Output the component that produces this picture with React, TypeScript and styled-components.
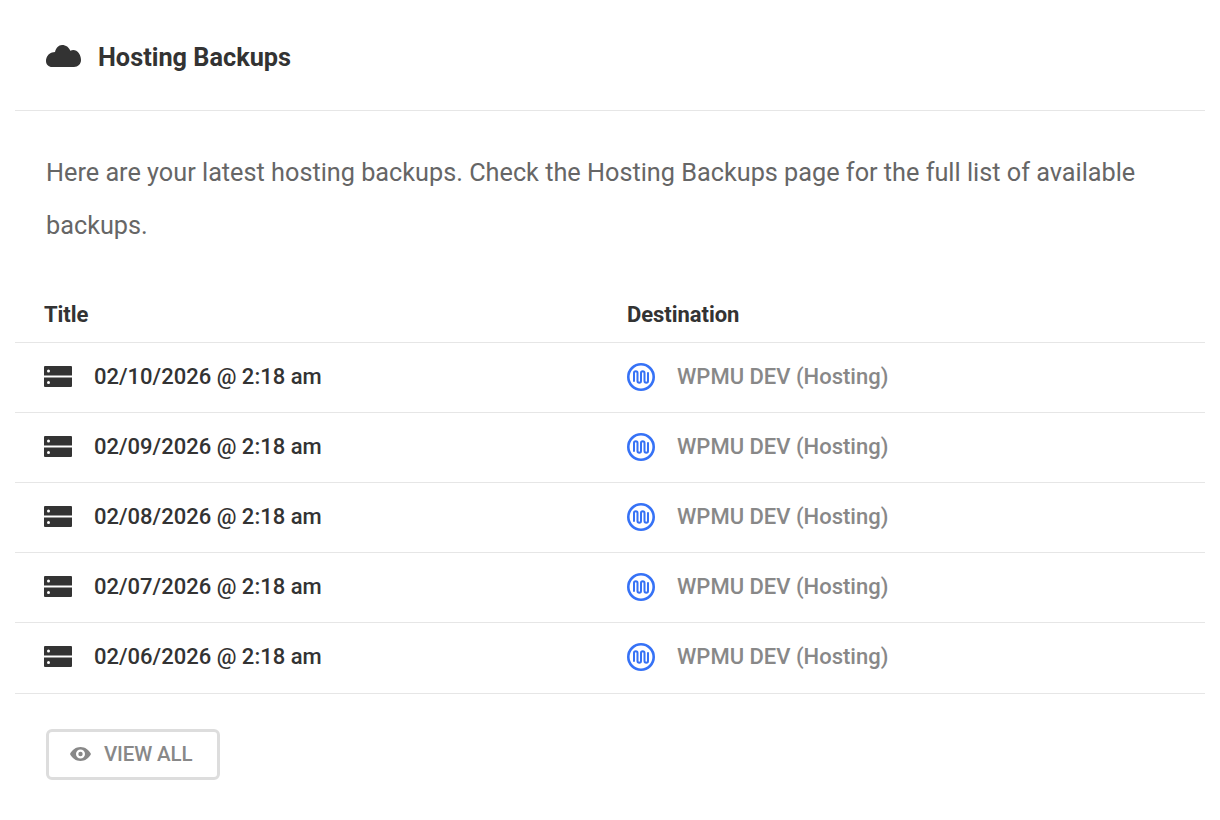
import styled, { createGlobalStyle } from "styled-components";

const GlobalStyle = createGlobalStyle`
  html, body {
    margin: 0;
    padding: 0;
    background: #fff;
    font-family: Roboto, "Liberation Sans", sans-serif;
  }
`;

const Box = styled.div`
  width: 1190px;
  margin: 0 15px;
`;

const BoxHeader = styled.header`
  display: flex;
  align-items: center;
  gap: 17px;
  height: 111px;
  padding: 2px 31px 0;
  box-sizing: border-box;
  border-bottom: 1px solid #e6e6e6;
`;

const BoxTitle = styled.h2`
  margin: 0;
  padding-top: 4px;
  font-size: 25.3px;
  font-weight: 700;
  line-height: 32px;
  color: #333;
`;

const Intro = styled.p`
  margin: 0;
  padding: 35px 31px 0;
  font-size: 25.25px;
  line-height: 53px;
  color: #666;
`;

const Table = styled.div`
  margin-top: 35px;
`;

const Row = styled.div<{ $head?: boolean }>`
  display: grid;
  grid-template-columns: 583px 1fr;
  align-items: center;
  height: ${({ $head }) => ($head ? "55px" : "67px")};
  padding-left: 29px;
  padding-bottom: ${({ $head }) => ($head ? "0" : "2px")};
  border-bottom: 1px solid #e6e6e6;

  &:last-child {
    height: 67px;
    padding-bottom: 3px;
  }
`;

const HeadCell = styled.div`
  font-size: 22px;
  font-weight: 700;
  letter-spacing: -0.05px;
  color: #333;
`;

const TitleCell = styled.div`
  display: flex;
  align-items: center;
  gap: 22px;
  font-size: 22px;
  font-weight: 500;
  color: #333;
`;

const DestCell = styled.div`
  display: flex;
  align-items: center;
  gap: 22px;
  font-size: 22px;
  font-weight: 500;
  color: #888;
`;

const Footer = styled.div`
  padding: 35px 31px 0;
`;

const ViewAll = styled.button`
  display: inline-flex;
  align-items: center;
  gap: 13px;
  height: 51px;
  width: 174px;
  box-sizing: border-box;
  padding: 0 0 2px 21px;
  background: #fff;
  border: 3px solid #ddd;
  border-radius: 6px;
  font-family: inherit;
  font-size: 20.5px;
  font-weight: 500;
  letter-spacing: -0.15px;
  color: #888;
`;

const CloudIcon = () => (
  <svg width="35" height="22" viewBox="0 0 35 22" fill="#333">
    <path d="M6 22C2.700 22 0 19.500 0 16C0 12 2.500 8.500 6 7.500C7 7.200 8 7 9 7C10 3 12.500 0 16 0C20 0 23 2.300 24.300 5.800C25.300 5.300 26.300 5.100 27.300 5.100C31.500 5.100 35 9.800 35 15C35 19 32 22 28 22H6z" />
  </svg>
);

const ServerIcon = () => (
  <svg width="28" height="21" viewBox="0 0 28 21">
    <path fill="#333" d="M1 0h26a1 1 0 0 1 1 1v8.500H0V1a1 1 0 0 1 1-1zM0 11.500h28V20a1 1 0 0 1-1 1H1a1 1 0 0 1-1-1z" />
    <circle cx="4.500" cy="5" r="1.500" fill="#fff" />
    <circle cx="4.500" cy="16.500" r="1.500" fill="#fff" />
  </svg>
);

const WpmuIcon = () => (
  <svg width="28" height="28" viewBox="0 0 28 28" fill="none" stroke="#3672f6">
    <circle cx="14" cy="14" r="12.700" strokeWidth="2.600" />
    <path
      d="M7 18V10a1.750 1.750 0 0 1 3.500 0V18a1.750 1.750 0 0 0 3.500 0V10a1.750 1.750 0 0 1 3.500 0V18a1.750 1.750 0 0 0 3.500 0V10"
      strokeWidth="2"
      strokeLinecap="round"
    />
  </svg>
);

const EyeIcon = () => (
  <svg width="21" height="14" viewBox="0 0 21 14" fill="#888">
    <path fillRule="evenodd" d="M10.500 0C15 0 19 2.800 21 7c-2 4.200-6 7-10.500 7S2 11.200 0 7c2-4.200 6-7 10.500-7zm0 2.500a4.500 4.500 0 1 0 0 9 4.500 4.500 0 0 0 0-9zm0 2.300a2.200 2.200 0 1 1 0 4.400 2.200 2.200 0 0 1 0-4.400z" />
  </svg>
);

const backups = ["02/10/2026", "02/09/2026", "02/08/2026", "02/07/2026", "02/06/2026"];

export default function App() {
  return (
    <>
      <GlobalStyle />
      <Box>
        <BoxHeader>
          <CloudIcon />
          <BoxTitle>Hosting Backups</BoxTitle>
        </BoxHeader>
        <Intro>
          Here are your latest hosting backups. Check the Hosting Backups page for the full list of available backups.
        </Intro>
        <Table>
          <Row $head>
            <HeadCell>Title</HeadCell>
            <HeadCell>Destination</HeadCell>
          </Row>
          {backups.map((date) => (
            <Row key={date}>
              <TitleCell>
                <ServerIcon />
                {date} @ 2:18 am
              </TitleCell>
              <DestCell>
                <WpmuIcon />
                WPMU DEV (Hosting)
              </DestCell>
            </Row>
          ))}
        </Table>
        <Footer>
          <ViewAll>
            <EyeIcon />
            VIEW ALL
          </ViewAll>
        </Footer>
      </Box>
    </>
  );
}
